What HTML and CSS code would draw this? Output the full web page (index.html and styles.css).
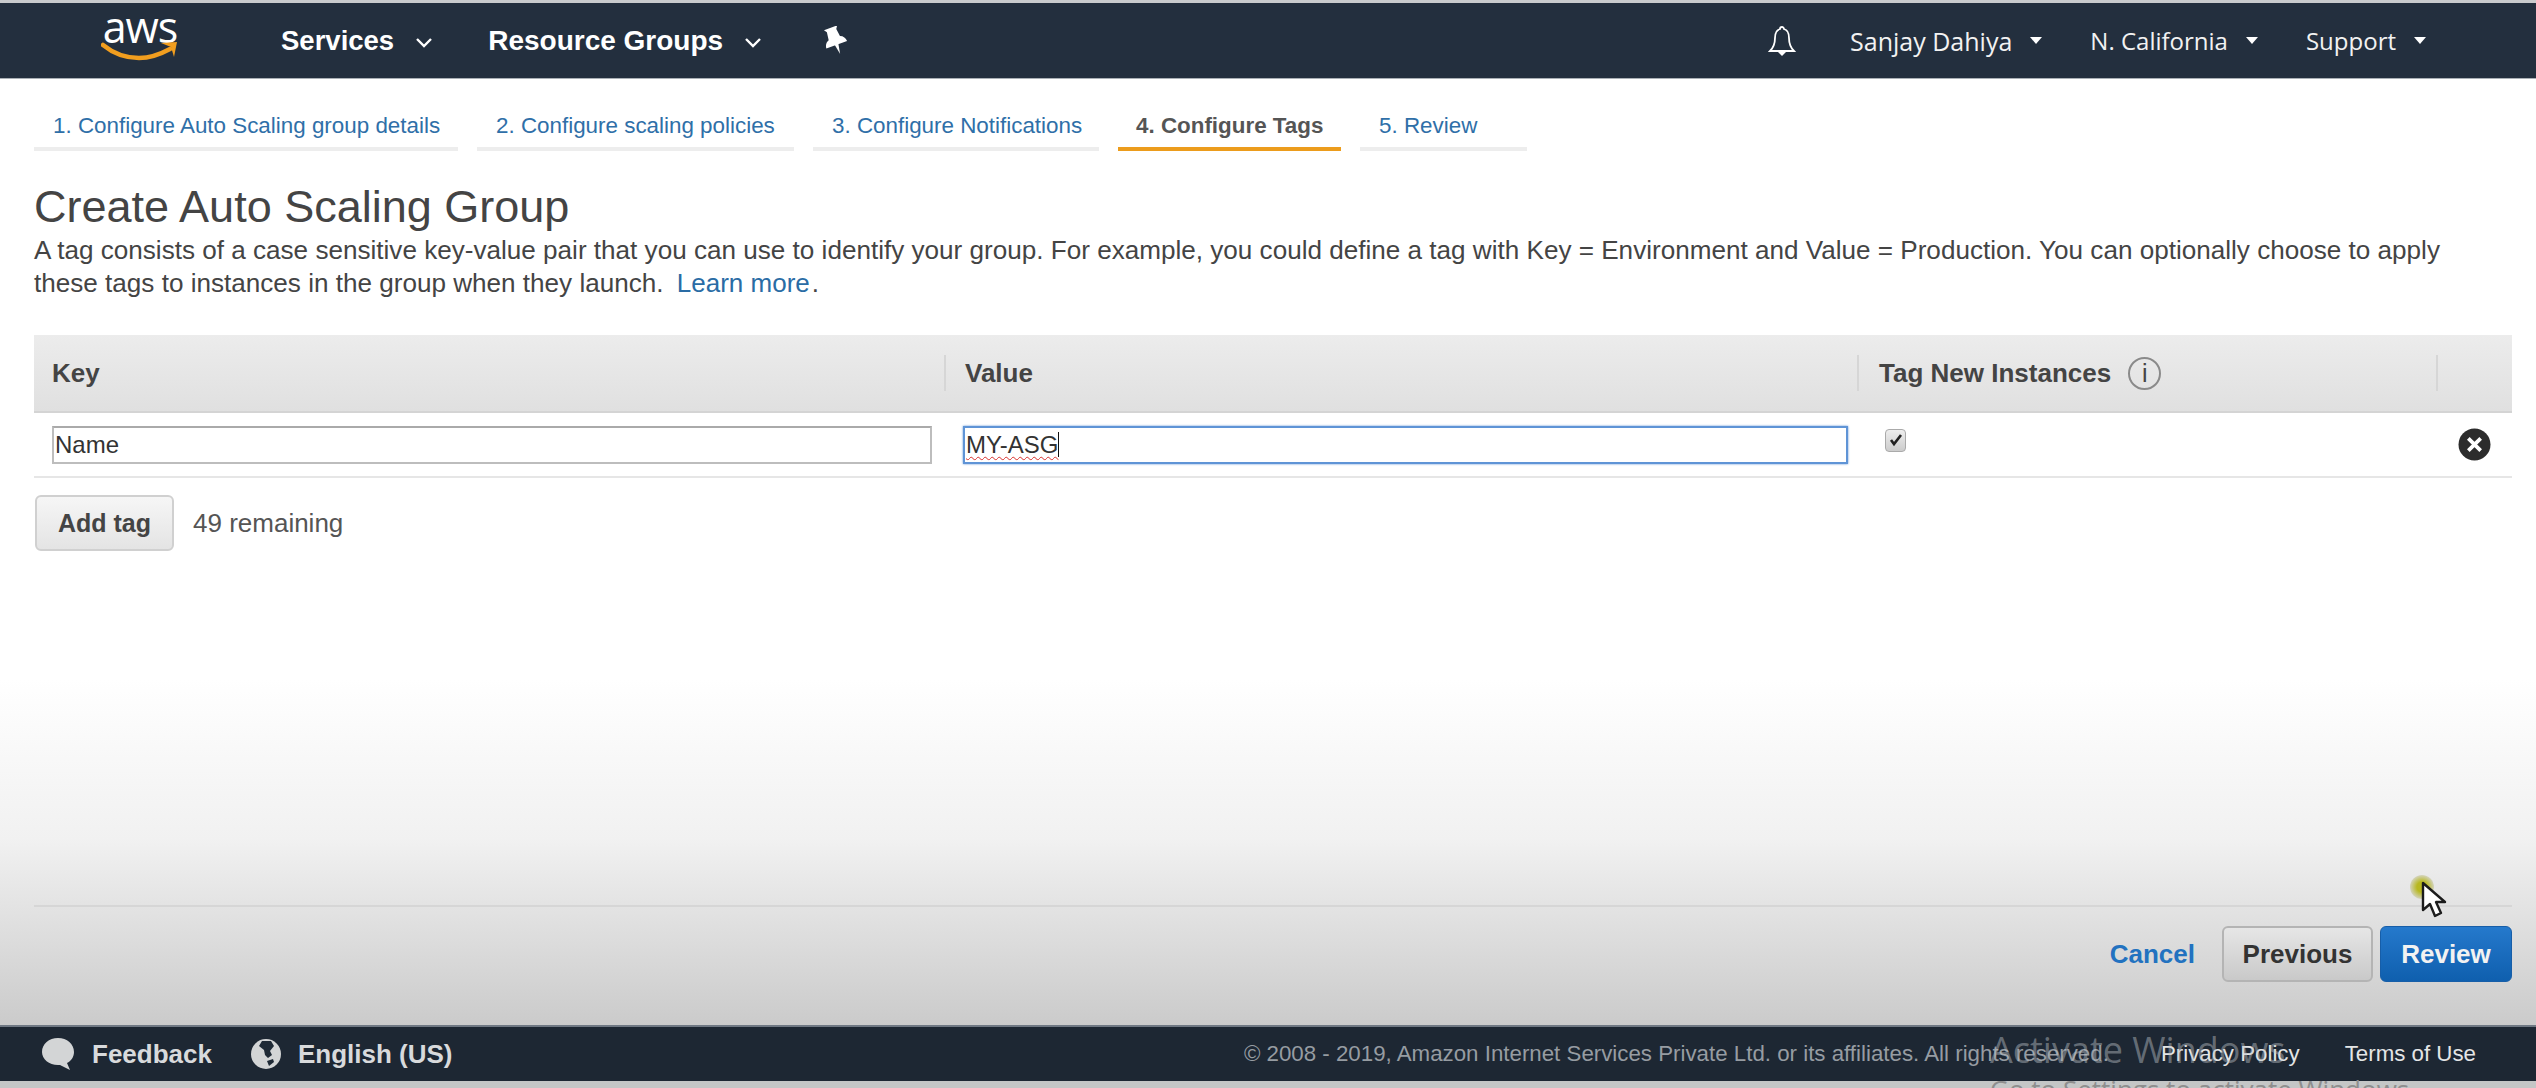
FILE: index.html
```html
<!DOCTYPE html>
<html lang="en">
<head>
  <meta charset="UTF-8">
  <title>Create Auto Scaling Group</title>
  <link rel="stylesheet" href="styles.css">
</head>
<body>
  <header class="topbar">
    <div class="logo">
      <span class="logo-text">aws</span>
      <svg class="logo-smile" width="78" height="22" viewBox="0 0 78 22"><path d="M2 5c11 9 22 13 36 13 10 0 20-3 31-9" fill="none" stroke="#f19e1f" stroke-width="4.5" stroke-linecap="round"/><path d="M60 3l16-1-3 15-3-10z" fill="#f19e1f"/></svg>
    </div>
    <a class="nav-main nav-services">Services<svg class="chev" width="18" height="12" viewBox="0 0 18 12"><path d="M2 2l7 7 7-7" fill="none" stroke="#fff" stroke-width="2.4"/></svg></a>
    <a class="nav-main nav-groups">Resource Groups<svg class="chev" width="18" height="12" viewBox="0 0 18 12"><path d="M2 2l7 7 7-7" fill="none" stroke="#fff" stroke-width="2.4"/></svg></a>
    <svg class="pin" width="26" height="30" viewBox="0 0 24 30"><g transform="rotate(-20 12 14)" fill="#fff"><path d="M5 1h14l-2 3 1 8c3 1 5 4 5 7H1c0-3 2-6 5-7l1-8z"/><path d="M10 18h4l-2 11z"/></g></svg>
    <div class="nav-right">
      <svg class="bell" width="30" height="34" viewBox="0 0 30 34"><path d="M15 3c-1 0-2 1-2 2-4 1-5 5-5 9 0 5-1 9-5 13h24c-4-4-5-8-5-13 0-4-1-8-5-9 0-1-1-2-2-2z" fill="none" stroke="#fff" stroke-width="1.8"/><path d="M11 28h8l-4 4z" fill="#fff"/></svg>
      <a class="nav-item nav-user">Sanjay Dahiya<i class="caret"></i></a>
      <a class="nav-item">N. California<i class="caret"></i></a>
      <a class="nav-item">Support<i class="caret"></i></a>
    </div>
  </header>

  <main class="page">
    <nav class="steps">
      <a class="step step-1">1. Configure Auto Scaling group details</a>
      <a class="step step-2">2. Configure scaling policies</a>
      <a class="step step-3">3. Configure Notifications</a>
      <a class="step step-4 active">4. Configure Tags</a>
      <a class="step step-5">5. Review</a>
    </nav>

    <h1>Create Auto Scaling Group</h1>
    <p class="intro">A tag consists of a case sensitive key-value pair that you can use to identify your group. For example, you could define a tag with Key = Environment and Value = Production. You can optionally choose to apply these tags to instances in the group when they launch. <a class="learn">Learn more</a>.</p>

    <div class="tag-table">
      <div class="tag-head">
        <div class="col-key">Key</div>
        <div class="col-value sep">Value</div>
        <div class="col-new sep">Tag New Instances<span class="info">i</span></div>
        <div class="col-del sep"></div>
      </div>
      <div class="tag-row">
        <div class="col-key"><div class="field">Name</div></div>
        <div class="col-value"><div class="field focused"><span class="misspelt">MY-ASG</span><i class="text-caret"></i></div></div>
        <div class="col-new"><span class="check"><svg width="14" height="14" viewBox="0 0 14 14"><path d="M2 7l3 4 7-9" fill="none" stroke="#222" stroke-width="2.6"/></svg></span></div>
        <div class="col-del"><svg width="33" height="33" viewBox="0 0 32 32"><circle cx="16" cy="16" r="15.5" fill="#2c2c2c"/><path d="M10 10l12 12M22 10l-12 12" stroke="#fff" stroke-width="3.6"/></svg></div>
      </div>
    </div>

    <div class="add-line">
      <button class="btn add-btn">Add tag</button>
      <span class="remaining">49 remaining</span>
    </div>

    <div class="actions">
      <a class="cancel">Cancel</a>
      <button class="btn previous">Previous</button>
      <button class="btn review">Review</button>
    </div>
  </main>

  <footer class="footer">
    <svg width="36" height="34" viewBox="0 0 36 34"><path d="M18 1c9 0 16 6 16 14 0 5-3 9-7 11l3 7-10-5c-1 0-1 0-2 0C9 28 2 22 2 15 2 7 9 1 18 1z" fill="#d3d5d6"/></svg>
    <span class="foot-strong feedback">Feedback</span>
    <svg width="32" height="32" viewBox="0 0 32 32"><circle cx="16" cy="16" r="15" fill="#d3d5d6"/><path d="M12 3l9 0 3 5-4 5 2 4-4 3-3-3-1-5-5-4zM17 23l6-2 1 3-5 4z" fill="#1f2a36"/></svg>
    <span class="foot-strong">English (US)</span>
    <span class="copyright">© 2008 - 2019, Amazon Internet Services Private Ltd. or its affiliates. All rights reserved.</span>
    <a class="foot-link privacy">Privacy Policy</a>
    <a class="foot-link">Terms of Use</a>
  </footer>
  <div class="under-footer"></div>

  <div class="watermark">Activate Windows</div>
  <div class="watermark-sub">Go to Settings to activate Windows.</div>
  <div class="pointer">
    <span class="halo"></span>
    <svg width="26" height="38" viewBox="0 0 26 38"><path d="M2 2v27l7-6 5 12 6-3-5-11h9z" fill="#fff" stroke="#1c1c1c" stroke-width="2.400" stroke-linejoin="round"/></svg>
  </div>
</body>
</html>
```

FILE: styles.css
```css
html, body { margin: 0; height: 100%; }
body { width: 2536px; height: 1088px; overflow: hidden; position: relative; display: flex; flex-direction: column; background: #fff; font-family: "Liberation Sans", Arial, sans-serif; color: #444; border-top: 3px solid #c9cbcd; box-sizing: border-box; }
a { text-decoration: none; }

.topbar { height: 76px; flex: none; display: flex; align-items: center; background: #232f3e; color: #fff; border-bottom: 1px solid #aab0b6; box-sizing: border-box; }
.logo { width: 78px; margin-left: 101px; display: flex; flex-direction: column; align-items: center; }
.logo-text { font: 43px/32px "Open Sans", sans-serif; color: #fff; letter-spacing: -1px; margin-top: -8px; }
.logo-smile { margin-top: -3px; }
.nav-main { font-size: 27.5px; font-weight: bold; color: #fff; display: flex; align-items: center; }
.nav-services { margin-left: 102px; }
.nav-groups { margin-left: 55px; font-size: 28px; }
.chev { margin-left: 21px; margin-top: 4px; }
.pin { margin-left: 60px; }
.nav-right { margin-left: auto; display: flex; align-items: center; padding-right: 110px; }
.bell { margin-right: 53px; }
.nav-item { font: 24px "Open Sans", sans-serif; color: #f2f2f2; display: flex; align-items: center; margin-right: 48px; white-space: nowrap; }
.nav-user { font-size: 25px; }
.nav-item:last-child { margin-right: 0; }
.caret { width: 0; height: 0; border: 6px solid transparent; border-top: 7px solid #fff; border-bottom: 0; margin-left: 18px; }

.page { flex: 1; min-height: 0; display: flex; flex-direction: column; padding: 0 24px 0 34px; background: linear-gradient(#fff 600px, #f1f1f1 760px, #cbcbcb 945px); }
.steps { display: flex; gap: 19px; margin-top: 27px; }
.step { font-size: 22.4px; line-height: 28px; height: 45px; box-sizing: border-box; color: #2f6fa8; border-bottom: 4px solid #ededed; padding: 6px 0 0 19px; white-space: nowrap; }
.step-1 { width: 424px; }
.step-2 { width: 317px; }
.step-3 { width: 286px; }
.step-4 { width: 223px; padding-left: 18px; }
.step-5 { width: 167px; }
.step.active { color: #555; font-weight: bold; border-bottom-color: #ec9c1c; }

h1 { font-size: 45px; font-weight: normal; line-height: 50px; margin: 31px 0 0; color: #444; }
.intro { font-size: 26.1px; line-height: 33px; margin: 2px 0 0; color: #444; max-width: 2440px; }
.learn { color: #2a6ca5; margin-left: 6px; margin-right: 2px; font-size: 26px; }

.tag-table { margin-top: 35px; }
.tag-head { height: 78px; display: flex; align-items: center; background: linear-gradient(#ececec, #e0e0e0); border-bottom: 2px solid #d4d4d4; box-sizing: border-box; font-size: 26px; font-weight: bold; color: #444; }
.tag-row { height: 65px; display: flex; align-items: center; border-bottom: 2px solid #e6e6e6; box-sizing: border-box; }
.col-key { width: 910px; padding-left: 18px; box-sizing: border-box; }
.col-value { width: 913px; padding-left: 19px; box-sizing: border-box; }
.col-new { width: 579px; padding-left: 20px; box-sizing: border-box; display: flex; align-items: center; }
.col-del { flex: 1; display: flex; justify-content: flex-end; padding-right: 21px; }
.sep { border-left: 2px solid #d6d6d6; height: 36px; line-height: 36px; }
.tag-head .col-del { height: 36px; justify-content: flex-start; }
.info { display: inline-block; width: 33px; height: 33px; margin-left: 17px; border: 2px solid #8a8a8a; border-radius: 50%; box-sizing: border-box; text-align: center; font: 25px/29px "Liberation Sans", sans-serif; color: #444; }

.field { height: 38px; width: 880px; box-sizing: border-box; border: 2px solid #bdbdbd; border-top-color: #aaa; background: #fff; font-size: 24px; line-height: 34px; padding-left: 1px; color: #333; display: flex; align-items: center; }
.field.focused { width: 885px; border-color: #5f94d6; box-shadow: 0 0 2px #5f94d6; }
.misspelt { text-decoration: underline wavy #d9302c; text-decoration-thickness: 1px; text-underline-offset: 3px; }
.text-caret { width: 1px; height: 25px; background: #111; }
.check { width: 21px; height: 23px; margin: -9px 0 0 8px; border: 1px solid #aaa; border-radius: 4px; background: linear-gradient(#eee, #ccc); display: flex; align-items: center; justify-content: center; box-sizing: border-box; }

.add-line { display: flex; align-items: center; margin-top: 17px; }
.btn { font-family: inherit; font-weight: bold; font-size: 25px; border-radius: 6px; cursor: pointer; }
.add-btn { width: 139px; height: 56px; margin-left: 1px; padding: 0; border: 2px solid #d0d0d0; background: linear-gradient(#f6f6f6, #e4e4e4); color: #444; }
.remaining { font-size: 26px; margin-left: 19px; color: #555; }

.actions { margin-top: auto; margin-bottom: 43px; border-top: 2px solid #d6d6d6; padding-top: 19px; display: flex; align-items: center; justify-content: flex-end; }
.cancel { font-size: 26px; font-weight: bold; color: #2272c0; margin-right: 27px; }
.previous { width: 151px; height: 56px; padding: 0; border: 2px solid #b4b4b4; background: linear-gradient(#e6e6e6, #c9c9c9); color: #333; font-size: 26px; }
.review { width: 132px; height: 56px; margin-left: 7px; padding: 0; border: 1px solid #175ea8; background: linear-gradient(#2579cc, #0f5fae); color: #f2f2f2; font-size: 26px; }

.footer { height: 56px; flex: none; display: flex; align-items: center; padding: 0 60px 0 40px; background: #1d2733; border-top: 2px solid #6f7883; box-sizing: border-box; color: #d8dadc; }
.foot-strong { font-size: 26px; font-weight: bold; margin-left: 16px; }
.feedback { margin-right: 38px; }
.copyright { margin-left: auto; font-size: 22.3px; color: #969ca2; white-space: nowrap; }
.foot-link { font-size: 22.3px; color: #e4e5e6; margin-left: 45px; white-space: nowrap; }
.privacy { margin-left: 52px; }
.under-footer { flex: none; height: 7px; background: #c4c6c6; }

.watermark { position: absolute; left: 1990px; top: 1022px; font: 36px "Open Sans", sans-serif; color: rgba(190, 195, 200, .45); white-space: nowrap; }
.watermark-sub { position: absolute; left: 1990px; top: 1068px; font: 26px "Open Sans", sans-serif; color: #8e8e8e; white-space: nowrap; }
.pointer { position: absolute; left: 2410px; top: 872px; width: 40px; height: 50px; }
.pointer svg { position: absolute; left: 11px; top: 6px; }
.halo { position: absolute; left: 0; top: 0; width: 24px; height: 24px; border-radius: 50%; background: radial-gradient(#b8b820 30%, rgba(190,190,140,.5) 70%, transparent); }
```
